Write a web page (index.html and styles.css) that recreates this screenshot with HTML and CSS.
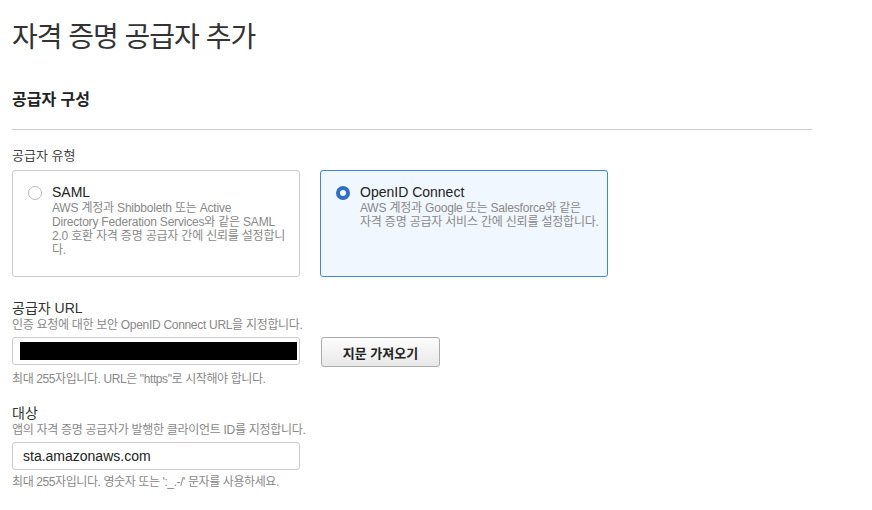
FILE: index.html
```html
<!DOCTYPE html>
<html lang="ko">
<head>
<meta charset="utf-8">
<link rel="stylesheet" href="styles.css">
</head>
<body>
<div class="page">
  <h1 class="title">자격 증명 공급자 추가</h1>
  <h2 class="section">공급자 구성</h2>
  <div class="rule"></div>

  <div class="label">공급자 유형</div>
  <div class="cards">
    <div class="card">
      <span class="radio"></span>
      <div class="card-body">
        <div class="card-title">SAML</div>
        <div class="card-desc">AWS 계정과 Shibboleth 또는 Active<br>Directory Federation Services와 같은 SAML<br>2.0 호환 자격 증명 공급자 간에 신뢰를 설정합니<br>다.</div>
      </div>
    </div>
    <div class="card card-selected">
      <span class="radio radio-on"></span>
      <div class="card-body">
        <div class="card-title">OpenID Connect</div>
        <div class="card-desc">AWS 계정과 Google 또는 Salesforce와 같은<br>자격 증명 공급자 서비스 간에 신뢰를 설정합니다.</div>
      </div>
    </div>
  </div>

  <div class="field field-url">
    <div class="label-main">공급자 URL</div>
    <div class="desc">인증 요청에 대한 보안 OpenID Connect URL을 지정합니다.</div>
    <div class="row">
      <div class="input"><span class="redact"></span></div>
      <button class="btn">지문 가져오기</button>
    </div>
    <div class="help">최대 255자입니다. URL은 "https"로 시작해야 합니다.</div>
  </div>

  <div class="field field-aud">
    <div class="label-main">대상</div>
    <div class="desc">앱의 자격 증명 공급자가 발행한 클라이언트 ID를 지정합니다.</div>
    <div class="row">
      <div class="input"><span class="value">sta.amazonaws.com</span></div>
    </div>
    <div class="help">최대 255자입니다. 영숫자 또는 ':_.-/' 문자를 사용하세요.</div>
  </div>
</div>
</body>
</html>
```

FILE: styles.css
```css
html, body {
  margin: 0;
  padding: 0;
  background: #fff;
}
body {
  font-family: "Liberation Sans", "Noto Sans CJK KR", sans-serif;
  color: #333;
}
.page {
  padding: 0 12px;
  width: 800px;
}
.title {
  margin: 0;
  padding-top: 20px;
  font-size: 28px;
  line-height: 36px;
  font-weight: 400;
  letter-spacing: -1px;
  color: #333;
}
.section {
  margin: 0;
  padding-top: 33px;
  font-size: 16px;
  line-height: 22px;
  font-weight: 700;
  color: #222;
}
.rule {
  margin-top: 18px;
  height: 1px;
  background: #ccc;
  width: 800px;
}
.label {
  margin-top: 17px;
  font-size: 13px;
  line-height: 18px;
  color: #444;
}
.cards {
  display: flex;
  gap: 20px;
  margin-top: 5px;
}
.card {
  box-sizing: border-box;
  width: 288px;
  height: 107px;
  border: 1px solid #ccc;
  border-radius: 3px;
  display: flex;
  padding: 13px 4px 0 15px;
  gap: 10px;
}
.card-selected {
  background: #f1f7fe;
  border-color: #3d87dd;
}
.radio {
  box-sizing: border-box;
  flex: none;
  width: 14px;
  height: 14px;
  border: 1px solid #bbb;
  border-radius: 50%;
  background: #fff;
  margin-top: 2px;
}
.radio-on {
  border: 4px solid #2e6fcb;
}
.card-title {
  font-size: 14px;
  line-height: 16px;
  color: #222;
}
.card-desc {
  font-size: 12px;
  line-height: 14px;
  letter-spacing: -0.2px;
  white-space: nowrap;
  color: #888;
  margin-top: 1px;
}
.field-url {
  margin-top: 22px;
}
.field-aud {
  margin-top: 17px;
}
.label-main {
  font-size: 14px;
  line-height: 18px;
  color: #333;
}
.desc {
  font-size: 12px;
  line-height: 16px;
  letter-spacing: -0.3px;
  color: #888;
}
.row {
  display: flex;
  align-items: flex-start;
  gap: 21px;
  margin-top: 4px;
}
.input {
  box-sizing: border-box;
  width: 288px;
  height: 28px;
  border: 1px solid #ccc;
  border-radius: 3px;
  background: #fff;
  display: flex;
  align-items: center;
  padding: 0 2px 0 7px;
}
.redact {
  display: block;
  width: 277px;
  height: 18px;
  background: #000;
}
.value {
  font-size: 14px;
  color: #222;
  padding-left: 3px;
}
.btn {
  box-sizing: border-box;
  width: 119px;
  height: 30px;
  border: 1px solid #aaa;
  border-radius: 3px;
  background: linear-gradient(#fdfdfd, #e8e8e8);
  font-family: "Liberation Sans", "Noto Sans CJK KR", sans-serif;
  font-size: 13px;
  font-weight: 700;
  color: #222;
  padding: 0;
}
.help {
  margin-top: 4px;
  font-size: 12px;
  line-height: 16px;
  letter-spacing: -0.4px;
  color: #888;
}
```
